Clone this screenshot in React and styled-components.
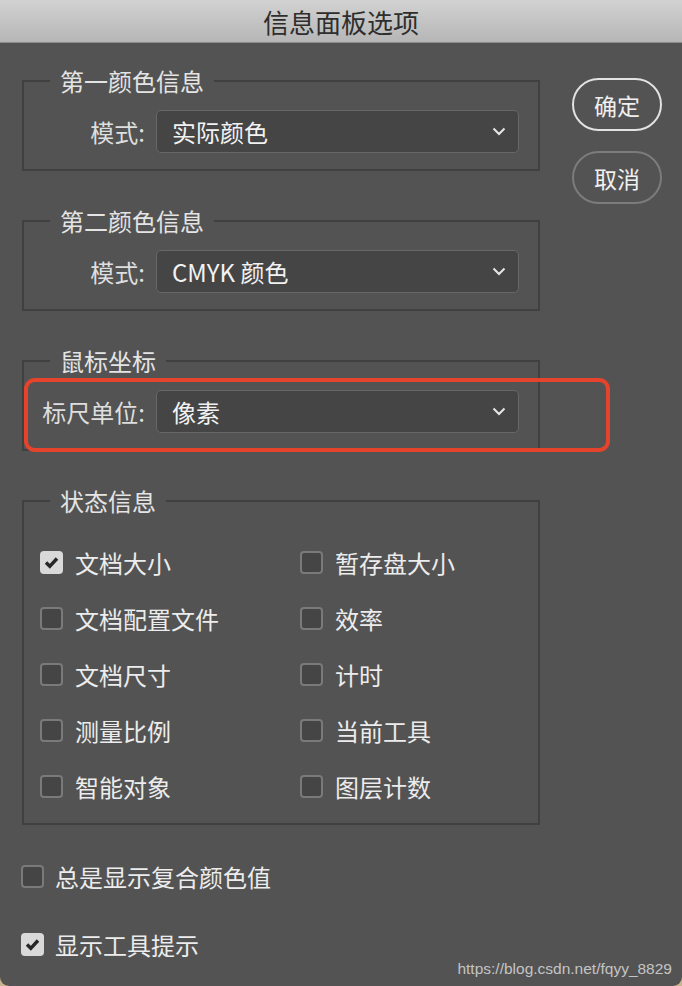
import React from 'react';
import styled, { createGlobalStyle } from 'styled-components';

const GlobalStyle = createGlobalStyle`
  html, body {
    margin: 0;
    padding: 0;
    background: #c8b48e;
  }
  body {
    font-family: "Noto Sans CJK SC", "Noto Sans", sans-serif;
  }
`;

const Dialog = styled.div`
  width: 682px;
  height: 986px;
  background: #535353;
  border-radius: 0 0 9px 9px;
  overflow: hidden;
  display: flex;
  flex-direction: column;
`;

const TitleBar = styled.div`
  height: 42px;
  flex-shrink: 0;
  background: linear-gradient(#d2d2d2, #b6b6b6);
  border-bottom: 1px solid #8c8c8c;
  display: flex;
  align-items: center;
  justify-content: center;
  font-size: 26px;
  color: #2e2e2e;
`;

const Body = styled.div`
  position: relative;
  flex: 1;
  padding: 24px 0 0 22px;
  display: flex;
  gap: 32px;
`;

const LeftCol = styled.div`
  width: 518px;
  display: flex;
  flex-direction: column;
  gap: 36px;
`;

const Buttons = styled.div`
  padding-top: 11px;
  display: flex;
  flex-direction: column;
  gap: 20px;
`;

const Button = styled.button`
  width: 90px;
  height: 53px;
  border-radius: 27px;
  border: 2px solid ${p => (p.$primary ? '#e2e2e2' : '#7c7c7c')};
  background: transparent;
  color: #f0f0f0;
  font-family: inherit;
  font-size: 23px;
  padding: 0;
`;

const Group = styled.fieldset`
  margin: 0;
  border: 2px solid #404040;
  min-width: 0;
  padding: ${p => p.$pad || '15px 17px 16px 16px'};
`;

const Legend = styled.legend`
  margin-left: 10px;
  padding: 0 10px;
  font-size: 24px;
  line-height: 28px;
  color: #e4e4e4;
`;

const Row = styled.div`
  display: flex;
  align-items: center;
  gap: 11px;
`;

const Label = styled.div`
  width: 105px;
  text-align: right;
  font-size: 24px;
  color: #dedede;
  white-space: nowrap;
`;

const Select = styled.div`
  width: 363px;
  height: 43px;
  box-sizing: border-box;
  border: 1.5px solid #676767;
  border-radius: 5px;
  background: #454545;
  display: flex;
  align-items: center;
  justify-content: space-between;
  padding: 0 12px 0 15px;
  font-size: 24px;
  color: #f2f2f2;
`;

const Chevron = () => (
  <svg width="14" height="9" viewBox="0 0 14 9">
    <polyline points="1.5,1.5 7,7 12.5,1.5" fill="none" stroke="#e6e6e6" strokeWidth="2" />
  </svg>
);

const CheckGrid = styled.div`
  display: grid;
  grid-template-columns: 260px 240px;
  grid-auto-rows: 56px;
`;

const CheckItem = styled.label`
  display: flex;
  align-items: center;
  gap: 12px;
  font-size: 24px;
  color: #ececec;
`;

const Box = styled.span`
  width: 23px;
  height: 23px;
  box-sizing: border-box;
  border-radius: 4px;
  border: ${p => (p.$checked ? 'none' : '2px solid #7a7a7a')};
  background: ${p => (p.$checked ? '#d9d9d9' : '#454545')};
  display: flex;
  align-items: center;
  justify-content: center;
  flex-shrink: 0;
`;

const Check = ({ checked }) => (
  <Box $checked={checked}>
    {checked && (
      <svg width="15" height="13" viewBox="0 0 15 13">
        <polyline points="2,6.5 5.8,10.3 13,2.5" fill="none" stroke="#262626" strokeWidth="3.4" />
      </svg>
    )}
  </Box>
);

const Extras = styled.div`
  margin-left: -1px;
  margin-top: -5px;
  display: flex;
  flex-direction: column;
  gap: 28px;
`;

const ExtraItem = styled(CheckItem)`
  height: 40px;
  gap: 11px;
`;

const Highlight = styled.div`
  position: absolute;
  left: 24px;
  top: 335px;
  width: 586px;
  height: 74px;
  box-sizing: border-box;
  border: 4px solid #e5432b;
  border-radius: 11px;
  pointer-events: none;
`;

const Watermark = styled.div`
  position: absolute;
  right: 10px;
  bottom: 8px;
  font-family: "Liberation Sans", Arial, sans-serif;
  font-size: 15.5px;
  color: #c4c4c4;
`;

const status = [
  ['文档大小', true], ['暂存盘大小', false],
  ['文档配置文件', false], ['效率', false],
  ['文档尺寸', false], ['计时', false],
  ['测量比例', false], ['当前工具', false],
  ['智能对象', false], ['图层计数', false],
];

export default function App() {
  return (
    <>
      <GlobalStyle />
      <Dialog>
        <TitleBar>信息面板选项</TitleBar>
        <Body>
          <LeftCol>
            <Group>
              <Legend>第一颜色信息</Legend>
              <Row>
                <Label>模式:</Label>
                <Select>实际颜色<Chevron /></Select>
              </Row>
            </Group>
            <Group>
              <Legend>第二颜色信息</Legend>
              <Row>
                <Label>模式:</Label>
                <Select>CMYK 颜色<Chevron /></Select>
              </Row>
            </Group>
            <Group>
              <Legend>鼠标坐标</Legend>
              <Row>
                <Label>标尺单位:</Label>
                <Select>像素<Chevron /></Select>
              </Row>
            </Group>
            <Group $pad="19px 16px 9px 16px">
              <Legend>状态信息</Legend>
              <CheckGrid>
                {status.map(([text, on]) => (
                  <CheckItem key={text}>
                    <Check checked={on} />
                    {text}
                  </CheckItem>
                ))}
              </CheckGrid>
            </Group>
            <Extras>
              <ExtraItem><Check checked={false} />总是显示复合颜色值</ExtraItem>
              <ExtraItem><Check checked />显示工具提示</ExtraItem>
            </Extras>
          </LeftCol>
          <Buttons>
            <Button $primary>确定</Button>
            <Button>取消</Button>
          </Buttons>
          <Highlight />
          <Watermark>https://blog.csdn.net/fqyy_8829</Watermark>
        </Body>
      </Dialog>
    </>
  );
}
